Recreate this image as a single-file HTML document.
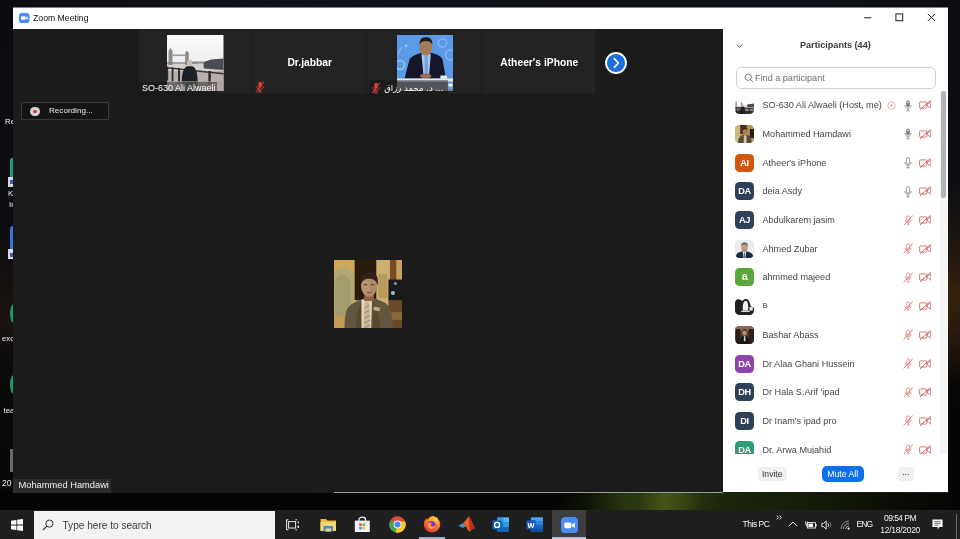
<!DOCTYPE html>
<html lang="en">
<head>
<meta charset="utf-8">
<title>Zoom Meeting</title>
<style>
*{box-sizing:border-box;margin:0;padding:0}
html,body{width:960px;height:539px;overflow:hidden;background:#0a0b0f}
body{position:relative;font-family:"Liberation Sans","DejaVu Sans",sans-serif;color:#fff;-webkit-font-smoothing:antialiased}
.abs{position:absolute}
#win,#task,#desk{will-change:transform}
#desk{position:absolute;left:0;top:0;width:960px;height:539px;background:#0a0b0f;overflow:hidden}
#win{position:absolute;left:13px;top:7px;width:935px;height:486px;background:#1b1b1b;overflow:hidden}
#title{position:absolute;left:0;top:0;width:935px;height:22px;background:linear-gradient(#7e7f82 0,#7e7f82 1px,#fff 1px);color:#111}
#title .t{position:absolute;left:20px;top:4.8px;font-size:8.7px;line-height:12px;color:#111;white-space:nowrap}
#video{position:absolute;left:0;top:22px;width:709.5px;height:464px;background:#1b1b1b}
.tile{position:absolute;top:-0.5px;height:65px;width:113px;background:#232323}
.tile .nm{position:absolute;left:0;right:0;top:26.8px;text-align:center;font-weight:bold;font-size:10.3px;line-height:14px;color:#fff}
#panel{position:absolute;left:709.5px;top:22px;width:225.5px;height:463px;background:#fff;color:#333;overflow:hidden}
#task{position:absolute;left:0;top:510px;width:960px;height:29px;background:#1f1f1f}

.lbl{position:absolute;top:52.5px;height:13px;background:rgba(20,20,20,.42);font-size:9px;line-height:13.5px;color:#fff;white-space:nowrap;overflow:hidden}
.ar{left:17px;top:52px;width:59.5px;height:15px;font-size:8.5px;line-height:15px;color:#fff;text-align:right;white-space:nowrap;font-family:"DejaVu Sans","Liberation Sans",sans-serif}
.nextbtn{left:592px;top:22.5px;width:22px;height:22px}
.rec{left:8px;top:72.5px;width:88px;height:18px;border:1px solid #3a3a3a;background:#141414;border-radius:1px}
.rec .dot{position:absolute;left:8px;top:3.5px;width:9.5px;height:9.5px;border-radius:50%;background:#d8d0d0}
.rec .dot i{position:absolute;left:3px;top:3px;width:3.5px;height:3.5px;border-radius:50%;background:#c8423c}
.rec .rt{position:absolute;left:27px;top:2px;font-size:8.1px;line-height:12px;color:#e8e8e8}
.mainlbl{left:0;top:449px;width:98px;height:14px;background:#2c2c2c;font-size:9.3px;line-height:13.5px;color:#eee;white-space:nowrap}
.mainlbl span{margin-left:5.5px}

.ptitle{left:77.5px;top:9.2px;font-weight:bold;font-size:9.1px;line-height:12px;color:#3a3a3a;white-space:nowrap}
.search{left:13.5px;top:37.25px;width:200px;height:22px;border:1px solid #cfcfcf;border-radius:5px;background:#fff}
.search span{position:absolute;left:18px;top:4px;font-size:9.1px;line-height:12px;color:#6e6e6e;white-space:nowrap}
.list{left:0;top:61px;width:217px;height:363.5px;overflow:hidden}
.row{position:absolute;left:0;width:217px;height:18px}
.row .av{position:absolute;left:12.6px;top:0;width:19px;height:18px;border-radius:4.5px;overflow:hidden;text-align:center;color:#fff;font-weight:bold;font-size:9.2px;line-height:18px;letter-spacing:-0.2px}
.row .av svg{display:block}
.row .pn{position:absolute;left:40px;top:3px;font-size:9.1px;line-height:12px;color:#454545;white-space:nowrap}
.sbtrack{left:217.5px;top:61px;width:6.5px;height:364px;background:#f4f4f4}
.sbthumb{left:218px;top:61px;width:5.5px;height:107px;background:#b4b4b4;border-radius:3px}
.foot{left:0;top:424.5px;width:225.5px;height:37.5px;background:#fff}
.btn{background:#f0f0f2;border-radius:4px;color:#333;font-size:8.6px;line-height:14.5px;text-align:center;white-space:nowrap}
.btn.blue{background:#0e71eb;color:#fff;line-height:16px;border-radius:5px;font-size:8.7px}

.sbox{left:34px;top:1px;width:241px;height:27.5px;background:#f3f3f3}
.sbox span{position:absolute;left:28.5px;top:7.5px;font-size:10.1px;line-height:14px;color:#3a3a3a;white-space:nowrap}
.tt{font-size:8.5px;line-height:12px;color:#f2f2f2;white-space:nowrap}
.dl{font-size:7.8px;line-height:10px;color:#f0f0f0;white-space:nowrap;width:50px}
</style>
</head>
<body>

<svg width="0" height="0" style="position:absolute">
  <defs>
    <filter id="blr" x="-5%" y="-5%" width="110%" height="110%"><feGaussianBlur stdDeviation="0.45"/></filter>
    <filter id="blr2" x="-5%" y="-5%" width="110%" height="110%"><feGaussianBlur stdDeviation="0.7"/></filter>
    <g id="micoff">
      <rect x="3.4" y="0.8" width="3.2" height="6" rx="1.6" fill="#e0433a"/>
      <path d="M1.6 5.2 C1.6 9.6 8.4 9.6 8.4 5.2" fill="none" stroke="#e0433a" stroke-width="1"/>
      <path d="M5 8.6 V10.6 M3.2 10.8 H6.8" stroke="#e0433a" stroke-width="1" fill="none"/>
      <path d="M8.6 0.8 L1.4 11" stroke="#e0433a" stroke-width="1.1"/>
    </g>

    <g id="micfill">
      <rect x="2.2" y="0.5" width="3.6" height="6.6" rx="1.8" fill="#777"/>
      <rect x="2.9" y="1.4" width="2.2" height="1.8" rx="0.8" fill="#d8d8d8"/>
      <path d="M0.9 5 C0.9 9.4 7.1 9.4 7.1 5" fill="none" stroke="#888" stroke-width="0.9"/>
      <path d="M4 8.4 V10.6 M2.3 10.8 H5.7" stroke="#888" stroke-width="0.9" fill="none"/>
    </g>
    <g id="micline">
      <rect x="2.4" y="0.7" width="3.2" height="6.4" rx="1.6" fill="none" stroke="#8a8a8a" stroke-width="0.9"/>
      <path d="M0.9 5 C0.9 9.4 7.1 9.4 7.1 5" fill="none" stroke="#8a8a8a" stroke-width="0.9"/>
      <path d="M4 8.4 V10.6 M2.3 10.8 H5.7" stroke="#8a8a8a" stroke-width="0.9" fill="none"/>
    </g>
    <g id="micmut">
      <rect x="3.7" y="0.9" width="3" height="5.6" rx="1.5" fill="none" stroke="#e08884" stroke-width="0.85"/>
      <path d="M2.3 4.8 C2.3 8.8 8.1 8.8 8.1 4.8" fill="none" stroke="#e08884" stroke-width="0.85"/>
      <path d="M5.2 7.9 V9.8 M3.6 10 H6.8" stroke="#e08884" stroke-width="0.85" fill="none"/>
      <path d="M9.9 0.4 L0.6 10.4" stroke="#c87470" stroke-width="0.9"/>
    </g>
    <g id="camoff">
      <rect x="0.6" y="1.9" width="7.2" height="6.2" rx="0.9" fill="none" stroke="#d8706c" stroke-width="0.95"/>
      <path d="M8.4 4.2 L11.8 1.8 V8.2 L8.4 5.8 Z" fill="none" stroke="#d8706c" stroke-width="0.9" stroke-linejoin="round"/>
      <path d="M11.6 0.3 L0.9 9.9" stroke="#c85a56" stroke-width="0.95"/>
    </g>
  </defs>
</svg>
<div id="desk">
  <div class="abs" style="left:0;top:0;width:960px;height:8px;background:linear-gradient(90deg,#0b0c10,#10131a 30%,#0d0f15 60%,#0e1117 85%,#0b0c10)"></div>
  <div class="abs" style="left:0;top:0;width:13px;height:493px;background:linear-gradient(180deg,#0b0c10 0,#0c0d11 45%,#15100e 58%,#1a1210 66%,#0c0a0a 72%,#070707 100%)"></div>
  <div class="abs" style="left:948px;top:0;width:12px;height:511px;background:linear-gradient(180deg,#0c0d12 0,#0d0e13 35%,#1c140f 47%,#33200f 57%,#2e1c0e 63%,#1a110a 70%,#070605 76%,#050505 100%)"></div>
  <div class="abs" style="left:0;top:492px;width:960px;height:19px;background:linear-gradient(90deg,#040404 0,#050505 58%,#0c1206 61%,#283610 65%,#303d10 70%,#1c280a 75%,#131b08 85%,#0a0d05 93%,#050505 100%)"></div>
  <div class="abs" style="left:640px;top:493px;width:60px;height:17px;background:linear-gradient(100deg,rgba(80,100,25,0) 0,rgba(84,104,28,.55) 40%,rgba(60,78,18,0) 100%)"></div>
  <!-- desktop icon fragments at left edge -->
  <div class="abs dl" style="left:5px;top:116.5px">Re</div>
  <div class="abs" style="left:9.5px;top:158px;width:3.5px;height:19px;background:#2a9478;border-radius:2px 0 0 0"></div>
  <div class="abs" style="left:8px;top:177px;width:5px;height:9.5px;background:#cfd6e4"></div>
  <div class="abs" style="left:10px;top:180px;width:3px;height:4px;background:#3a5ea8"></div>
  <div class="abs dl" style="left:8px;top:189px">K</div>
  <div class="abs dl" style="left:9px;top:199.5px">Ir</div>
  <div class="abs" style="left:9.5px;top:226px;width:3.5px;height:23px;background:#3a74d0;border-radius:4px 0 0 0"></div>
  <div class="abs" style="left:8px;top:249px;width:5px;height:10px;background:#d8dce6"></div>
  <div class="abs" style="left:10px;top:252.5px;width:3px;height:4px;background:#3a5ea8"></div>
  <div class="abs" style="left:9.5px;top:304px;width:7px;height:18.5px;background:#1f9a62;border-radius:50%"></div>
  <div class="abs dl" style="left:2px;top:334px">exc</div>
  <div class="abs" style="left:9.5px;top:375px;width:7px;height:19px;background:#1f9a62;border-radius:50%"></div>
  <div class="abs dl" style="left:3.5px;top:406px">tea</div>
  <div class="abs" style="left:9.5px;top:448.5px;width:3.5px;height:23.5px;background:#6a6a6a"></div>
  <div class="abs dl" style="left:2px;top:478px;font-size:8.6px">20</div>
</div>
<div id="win">
  <div id="title">
    <svg class="abs" style="left:6px;top:5.7px" width="10.5" height="10" viewBox="0 0 10.5 10"><rect width="10.5" height="10" rx="2.8" fill="#4a8cf5"/><rect x="2" y="3.2" width="4.6" height="3.6" rx="0.8" fill="#fff"/><path d="M7 4.4 L8.6 3.4 V6.6 L7 5.6 Z" fill="#fff"/></svg>
    <span class="t">Zoom Meeting</span>
    <svg class="abs" style="left:850.5px;top:10.4px" width="8" height="2" viewBox="0 0 8 2"><path d="M0 0.8 H7.4" stroke="#222" stroke-width="1"/></svg>
    <svg class="abs" style="left:881.5px;top:5.9px" width="9" height="9" viewBox="0 0 9 9"><rect x="0.9" y="0.9" width="6.8" height="6.8" fill="none" stroke="#222" stroke-width="1"/></svg>
    <svg class="abs" style="left:914px;top:5.9px" width="9" height="9" viewBox="0 0 9 9"><path d="M0.8 0.8 L8 8 M8 0.8 L0.8 8" stroke="#222" stroke-width="1"/></svg>
  </div>

  <div id="video"><div class="abs" style="left:0;top:0.5px;width:709.5px;height:463.5px">
    <!-- thumbnail strip -->
    <div class="tile" style="left:126px">
      <svg class="abs" style="left:28px;top:6px" width="56.5" height="56" viewBox="0 0 56 56" preserveAspectRatio="none">
        <defs>
          <linearGradient id="sky1" x1="0" y1="0" x2="0" y2="1"><stop offset="0" stop-color="#fbfafa"/><stop offset="0.45" stop-color="#f1efef"/><stop offset="0.62" stop-color="#d9d5d6"/><stop offset="1" stop-color="#b9b0ae"/></linearGradient>
        </defs>
        <rect width="56" height="56" fill="url(#sky1)"/><g filter="url(#blr)">
        <rect x="0" y="28" width="56" height="8" fill="#d5d1d2"/>
        <rect x="0" y="36" width="56" height="20" fill="#b8aeac"/>
        <!-- bridge -->
        <rect x="1.5" y="16" width="4" height="14" fill="#8d8a8a"/>
        <polygon points="1.5,16 3.5,13 5.5,16" fill="#8d8a8a"/>
        <rect x="18" y="18" width="3.6" height="12" fill="#8d8a8a"/>
        <polygon points="18,18 19.8,15.5 21.6,18" fill="#8d8a8a"/>
        <rect x="5.5" y="19.5" width="12.5" height="1.6" fill="#9c9999"/>
        <rect x="0" y="27.4" width="30" height="1.2" fill="#77787c"/>
        <!-- buildings right -->
        <polygon points="36,27 44,24.5 56,23.5 56,35 36.5,33.5" fill="#4c4d53"/>
        <rect x="24" y="26.5" width="12" height="2" fill="#8a8b90"/>
        <!-- railing -->
        <polygon points="0,32 56,38 56,39.4 0,33.4" fill="#3a3532"/>
        <rect x="4.6" y="32.5" width="1.8" height="14" fill="#2f2a28"/>
        <rect x="11" y="33" width="1.9" height="15" fill="#2f2a28"/>
        <rect x="41" y="36" width="2.4" height="13" fill="#2f2a28"/>
        <rect x="0" y="31.5" width="1.2" height="14" fill="#2f2a28"/>
        <!-- man -->
        <ellipse cx="22.3" cy="28" rx="2.6" ry="3.4" fill="#cdbdb6"/>
        <path d="M14.6 47 C14.6 37 17 32 20 31.2 L25 31.2 C28.5 32 30.2 37 30.4 47 L30 56 L15 56 Z" fill="#1f232c"/>
        <rect x="0" y="46" width="56" height="10" fill="#a9a09d" opacity="0.6"/>
      </g></svg>
      <div class="lbl" style="left:0;width:77.5px"><span style="margin-left:3px">SO-630 Ali Alwaeli</span></div>
    </div>
    <div class="tile" style="left:240px"><div class="nm" style="left:0.5px">Dr.jabbar</div>
      <svg class="abs mut" style="left:2px;top:52px" width="10" height="12" viewBox="0 0 10 12"><use href="#micoff"/></svg>
    </div>
    <div class="tile" style="left:354px;width:113.5px">
      <svg class="abs" style="left:29.5px;top:6px" width="56.5" height="56" viewBox="0 0 56 56" preserveAspectRatio="none">
        <rect width="56" height="56" fill="#5a9ae6"/><g filter="url(#blr)">
        <circle cx="45" cy="8" r="4.2" fill="none" stroke="#84b8f2" stroke-width="1.3"/>
        <circle cx="53" cy="20" r="5" fill="none" stroke="#84b8f2" stroke-width="1.3"/>
        <circle cx="3" cy="30" r="4.5" fill="none" stroke="#7fd0e8" stroke-width="1.6"/>
        <circle cx="9" cy="11" r="1.4" fill="#9cc8f6"/>
        <path d="M1 20 Q3 14 5 12" stroke="#84b8f2" stroke-width="1.2" fill="none"/>
        <!-- suit -->
        <path d="M7.5 43.5 L12.5 24 C15 20.5 21 18.5 24 18 L34 18 C38 18.5 43 20.5 45 24 L48.5 43.5 Z" fill="#141829"/>
        <!-- shirt -->
        <polygon points="24.2,19 33.5,19 31.8,40 26.2,40" fill="#a9c6ee"/>
        <rect x="27.4" y="21" width="3.2" height="18" fill="#6ea2e4"/>
        <!-- head -->
        <ellipse cx="28.7" cy="12.2" rx="6.2" ry="8.6" fill="#a77a5c"/>
        <path d="M22.3 10 C22 3 26 2.2 28.8 2.2 C32 2.2 35.4 3.4 35 10 C34 6.8 31.5 6 28.7 6 C26 6 23.4 6.8 22.3 10 Z" fill="#1c1a1c"/>
        <!-- hands -->
        <ellipse cx="28.4" cy="41" rx="5.6" ry="2.6" fill="#a06a58"/>
        <!-- desk -->
        <rect x="0" y="43.5" width="56" height="3.2" fill="#e4e6ea"/>
        <rect x="43" y="40.5" width="6.5" height="3.2" fill="#eef1f4"/>
        <rect x="0" y="46.7" width="56" height="9.3" fill="#7d8189"/>
        <rect x="50" y="47" width="6" height="7" fill="#6d9be0"/>
        <ellipse cx="53" cy="50" rx="2.4" ry="1.6" fill="#e8eef8"/>
      </g></svg>
      <div class="lbl" style="left:2px;width:78.5px;top:51px;height:14px"></div>
      <svg class="abs mut" style="left:4px;top:52.5px" width="10" height="12" viewBox="0 0 10 12"><use href="#micoff"/></svg>
      <div class="abs ar" dir="rtl">... د. محمد رزاق</div>
    </div>
    <div class="tile" style="left:468.5px;width:113px"><div class="nm" style="left:2.5px">Atheer's iPhone</div></div>
    <div class="abs nextbtn"><svg width="22" height="22" viewBox="0 0 22 22"><circle cx="11" cy="11" r="10" fill="#1a6fe0" stroke="#fff" stroke-width="1.8"/><path d="M9.3 6.6 L13.4 11 L9.3 15.4" fill="none" stroke="#fff" stroke-width="1.7" stroke-linecap="round" stroke-linejoin="round"/></svg></div>

    <!-- recording -->
    <div class="abs rec"><span class="dot"><i></i></span><span class="rt">Recording...</span></div>

    <!-- main photo -->
    <svg class="abs" style="left:320.7px;top:230.5px" width="68.5" height="68.2" viewBox="0 0 68 68" preserveAspectRatio="none">
      <rect width="68" height="68" fill="#a8864a"/><g filter="url(#blr2)">
      <rect x="-2" y="-2" width="24" height="72" fill="#cdaa58"/>
      <path d="M-1 70 L-1 16 C1 4 16 3 20 16 L20 70 Z" fill="#b3a873"/>
      <path d="M1 58 L1 22 C4 12 13 12 16.5 22 L16.5 58 Z" fill="#a39c6c"/>
      <rect x="20.5" y="-2" width="22" height="42" fill="#2c1c11"/>
      <rect x="42" y="-2" width="14" height="72" fill="#c9b172"/>
      <rect x="44" y="14" width="9" height="24" fill="#b99a5a"/>
      <rect x="55.5" y="-2" width="6.5" height="24" fill="#7a4826"/>
      <rect x="62" y="-2" width="8" height="24" fill="#c2a25c"/>
      <rect x="54" y="19.5" width="16" height="21" fill="#191a1e"/>
      <circle cx="58.5" cy="33" r="2" fill="#aeb6c8"/>
      <circle cx="61" cy="23.5" r="1.6" fill="#8a8f9a"/>
      <rect x="54" y="40.5" width="16" height="30" fill="#6c4a26"/>
      <rect x="56" y="52" width="12" height="8" fill="#8a6a3a"/>
      <rect x="-2" y="56" width="14" height="14" fill="#c49a56"/>
      <!-- suit -->
      <path d="M10.5 70 C10.5 50 13 45 23 41.5 L29 38.4 L41 38.4 L48 41.5 C56.5 45 58 52 58.5 70 Z" fill="#63573f"/>
      <path d="M22 70 C22 55 24 48 28 41 L27 70 Z" fill="#54492f"/>
      <path d="M46 70 C46 55 42 48 38 41 L39 70 Z" fill="#54492f"/>
      <!-- shirt + tie -->
      <polygon points="27.2,39.5 37.8,39.5 36.8,70 27.4,70" fill="#e2d6c0"/>
      <polygon points="30.4,42 35,42 36,70 29.2,70" fill="#c9b498"/>
      <path d="M30 48 L35.4 45 M29.8 53 L35.6 50 M29.6 58 L35.8 55 M29.4 63 L36 60 M29.3 68 L36 65" stroke="#a8906e" stroke-width="1.1"/>
      <polygon points="39.4,46.4 45.6,47.6 45.2,51 39.4,50.2" fill="#b5a88a"/>
      <!-- neck/head -->
      <rect x="30" y="32" width="9.6" height="9" fill="#8e6442"/>
      <ellipse cx="34.8" cy="25.8" rx="8" ry="10.8" fill="#b08a66"/>
      <ellipse cx="31.5" cy="27" rx="4" ry="7" fill="#bd9872" opacity=".7"/>
      <path d="M26.6 25 C25 13.6 30 12.6 35 12.6 C40.6 12.6 45 14.6 43.2 26 C42.6 20.5 39.6 18.6 35 18.6 C31 18.6 27.6 20 26.6 25 Z" fill="#33221a"/>
      <path d="M29.5 24.6 H33 M36.6 24.6 H40" stroke="#4a3224" stroke-width="1"/>
      <path d="M32.6 32.4 H37.4" stroke="#7a4e38" stroke-width="0.9"/>
      </g></svg>

    <!-- name label -->
    <div class="abs mainlbl"><span>Mohammed Hamdawi</span></div>
    <div class="abs" style="left:320.5px;top:462.2px;width:389px;height:1.1px;background:#9e9e9e"></div>
  </div></div>

  <div id="panel"><div class="abs" style="left:0;top:0.5px;width:225.5px;height:463px">
    <svg class="abs" style="left:13.5px;top:13px" width="7" height="6" viewBox="0 0 7 6"><path d="M0.8 1.6 L3.5 4.3 L6.2 1.6" fill="none" stroke="#555" stroke-width="1"/></svg>
    <div class="abs ptitle">Participants (44)</div>
    <div class="abs search"><svg class="abs" style="left:6.5px;top:5.5px" width="10" height="10" viewBox="0 0 10 10"><circle cx="4.2" cy="4.2" r="3.2" fill="none" stroke="#777" stroke-width="0.9"/><path d="M6.6 6.6 L9.2 9.2" stroke="#777" stroke-width="1"/></svg><span>Find a participant</span></div>
    <div class="abs list">
      <div class="row" style="top:5.70px"><div class="av ph"><svg width="19" height="18" viewBox="0 0 18 18" preserveAspectRatio="none"><rect width="18" height="18" fill="#fbfbfb"/><rect x="0" y="9.5" width="18" height="2" fill="#dedbdb"/><rect x="0.4" y="5.5" width="1.4" height="5" fill="#9a9797"/><rect x="5.6" y="6.3" width="1.3" height="4" fill="#9a9797"/><polygon points="11.5,8.6 18,7.6 18,11.5 11.6,11.2" fill="#4a4b50"/><rect x="0" y="11.5" width="18" height="6.5" fill="#8c8684"/><polygon points="0,10.8 18,12.6 18,13.3 0,11.5" fill="#2a2624"/><rect x="1.2" y="11" width="0.9" height="6" fill="#2a2624"/><rect x="3.4" y="11" width="0.9" height="6" fill="#2a2624"/><rect x="13" y="12" width="1" height="5" fill="#2a2624"/><ellipse cx="7.2" cy="9.4" rx="1" ry="1.2" fill="#c8b8b0"/><path d="M4.6 18 C4.6 12.5 5.8 10.6 7.2 10.6 C8.8 10.6 9.9 12.5 9.9 18 Z" fill="#1d2028"/><rect x="0" y="15" width="18" height="3" fill="#26221f" opacity=".85"/></svg></div><div class="pn">SO-630 Ali Alwaeli (Host, me)</div><svg class="abs" style="left:164px;top:4.6px" width="9" height="9" viewBox="0 0 9 9"><circle cx="4.5" cy="4.5" r="3.7" fill="none" stroke="#e2a5a5" stroke-width="0.9"/><circle cx="4.5" cy="4.5" r="1.1" fill="#dd8a8a"/></svg><svg class="abs" style="left:181.5px;top:3.5px" width="8" height="12" viewBox="0 0 8 12"><use href="#micfill"/></svg><svg class="abs" style="left:196.3px;top:4px" width="12.4" height="10.2" viewBox="0 0 12.4 10.2"><use href="#camoff"/></svg></div>
      <div class="row" style="top:34.40px"><div class="av ph"><svg width="19" height="18" viewBox="0 0 18 18" preserveAspectRatio="none"><rect width="18" height="18" fill="#b8954e"/><rect x="0" y="0" width="5" height="18" fill="#cdb77c"/><rect x="5" y="0" width="6" height="9" fill="#4a2f18"/><rect x="14" y="4" width="4" height="9" fill="#2a1e14"/><path d="M3 18 C3 12 5 10.6 8 10 L11.5 10 C14.5 10.6 15.6 12 15.6 18 Z" fill="#5b4a39"/><rect x="8.3" y="10.3" width="2.6" height="7.7" fill="#d4c4ac"/><ellipse cx="9.5" cy="6.6" rx="2.2" ry="3" fill="#ad7c56"/><path d="M7.2 6 C7 3 8.4 2.8 9.6 2.8 C11 2.8 12 3.2 11.8 6 C11.4 4.6 10.6 4.3 9.5 4.3 C8.4 4.3 7.6 4.6 7.2 6 Z" fill="#3a2618"/></svg></div><div class="pn">Mohammed Hamdawi</div><svg class="abs" style="left:181.5px;top:3.5px" width="8" height="12" viewBox="0 0 8 12"><use href="#micfill"/></svg><svg class="abs" style="left:196.3px;top:4px" width="12.4" height="10.2" viewBox="0 0 12.4 10.2"><use href="#camoff"/></svg></div>
      <div class="row" style="top:63.10px"><div class="av" style="background:#d4560e"><span>AI</span></div><div class="pn">Atheer's iPhone</div><svg class="abs" style="left:181.5px;top:3.5px" width="8" height="12" viewBox="0 0 8 12"><use href="#micline"/></svg><svg class="abs" style="left:196.3px;top:4px" width="12.4" height="10.2" viewBox="0 0 12.4 10.2"><use href="#camoff"/></svg></div>
      <div class="row" style="top:91.80px"><div class="av" style="background:#2e405a"><span>DA</span></div><div class="pn">deia Asdy</div><svg class="abs" style="left:181.5px;top:3.5px" width="8" height="12" viewBox="0 0 8 12"><use href="#micline"/></svg><svg class="abs" style="left:196.3px;top:4px" width="12.4" height="10.2" viewBox="0 0 12.4 10.2"><use href="#camoff"/></svg></div>
      <div class="row" style="top:120.50px"><div class="av" style="background:#2e405a"><span>AJ</span></div><div class="pn">Abdulkarem jasim</div><svg class="abs" style="left:180px;top:3.5px" width="10.6" height="10.8" viewBox="0 0 10.6 10.8"><use href="#micmut"/></svg><svg class="abs" style="left:196.3px;top:4px" width="12.4" height="10.2" viewBox="0 0 12.4 10.2"><use href="#camoff"/></svg></div>
      <div class="row" style="top:149.20px"><div class="av ph"><svg width="19" height="18" viewBox="0 0 18 18" preserveAspectRatio="none"><rect width="18" height="18" fill="#e9edf0"/><path d="M0.5 18 C1 13.5 3 12.4 6.5 11.6 L11.5 11.6 C15 12.4 17 13.5 17.5 18 Z" fill="#1e2a3e"/><polygon points="7.4,11.6 10.6,11.6 9.8,18 8.2,18" fill="#e8eef6"/><rect x="8.5" y="12.6" width="1" height="5.4" fill="#4a6ea8"/><ellipse cx="9" cy="7.4" rx="3.1" ry="4.2" fill="#c39c7c"/><path d="M5.9 6.6 C5.6 3 7.4 2.6 9 2.6 C10.8 2.6 12.4 3 12.1 6.6 C11.5 4.8 10.5 4.5 9 4.5 C7.5 4.5 6.5 4.8 5.9 6.6 Z" fill="#6a6866"/><path d="M6.4 9.4 C7 12 11 12 11.6 9.4 C10.8 10.6 7.2 10.6 6.4 9.4 Z" fill="#8a8380"/></svg></div><div class="pn">Ahmed Zubar</div><svg class="abs" style="left:180px;top:3.5px" width="10.6" height="10.8" viewBox="0 0 10.6 10.8"><use href="#micmut"/></svg><svg class="abs" style="left:196.3px;top:4px" width="12.4" height="10.2" viewBox="0 0 12.4 10.2"><use href="#camoff"/></svg></div>
      <div class="row" style="top:177.90px"><div class="av" style="background:#5aa83c;font-size:11px;line-height:16.5px"><span>a</span></div><div class="pn">ahmmed majeed</div><svg class="abs" style="left:180px;top:3.5px" width="10.6" height="10.8" viewBox="0 0 10.6 10.8"><use href="#micmut"/></svg><svg class="abs" style="left:196.3px;top:4px" width="12.4" height="10.2" viewBox="0 0 12.4 10.2"><use href="#camoff"/></svg></div>
      <div class="row" style="top:206.60px"><div class="av ph"><svg width="19" height="18" viewBox="0 0 18 18" preserveAspectRatio="none"><rect width="18" height="18" fill="#fff"/><path d="M0 18 L0 6 C0 3 2 1.5 4.5 2.4 L7 4 C9 1 13 1.6 13.6 5 L15 9 L18 11 L18 18 Z" fill="#20211f"/><path d="M8 6 C8.6 3.6 11.4 3.4 12 5.8 C12.6 8 12.8 11 12.4 13.4 L7.6 13.4 C7 10.6 7.4 8 8 6 Z" fill="#f1f1f1"/><rect x="6" y="13.6" width="8" height="1.4" fill="#d9d9d9"/><rect x="13.8" y="9.8" width="3" height="3.8" fill="#e8e8e8"/></svg></div><div class="pn" style="font-size:7.6px">B</div><svg class="abs" style="left:180px;top:3.5px" width="10.6" height="10.8" viewBox="0 0 10.6 10.8"><use href="#micmut"/></svg><svg class="abs" style="left:196.3px;top:4px" width="12.4" height="10.2" viewBox="0 0 12.4 10.2"><use href="#camoff"/></svg></div>
      <div class="row" style="top:235.30px"><div class="av ph"><svg width="19" height="18" viewBox="0 0 18 18" preserveAspectRatio="none"><rect width="18" height="18" fill="#5a3a2a"/><rect x="0" y="0" width="18" height="5" fill="#8a6a52"/><rect x="1" y="3" width="4" height="15" fill="#2a1c18"/><rect x="13" y="3" width="5" height="15" fill="#30201a"/><path d="M4.6 18 C4.6 12 6 10.6 7.6 10 L10.6 10 C12.4 10.6 13.6 12 13.6 18 Z" fill="#1c1716"/><rect x="8.4" y="10.2" width="1.5" height="5" fill="#d8d0cc"/><ellipse cx="9.1" cy="6.8" rx="2" ry="2.8" fill="#b98d74"/><path d="M7 6 C7 3.4 8.2 3.2 9.1 3.2 C10.2 3.2 11.3 3.6 11.2 6 C10.8 4.8 10.2 4.6 9.1 4.6 C8 4.6 7.4 4.8 7 6 Z" fill="#241a16"/></svg></div><div class="pn">Bashar Abass</div><svg class="abs" style="left:180px;top:3.5px" width="10.6" height="10.8" viewBox="0 0 10.6 10.8"><use href="#micmut"/></svg><svg class="abs" style="left:196.3px;top:4px" width="12.4" height="10.2" viewBox="0 0 12.4 10.2"><use href="#camoff"/></svg></div>
      <div class="row" style="top:264.00px"><div class="av" style="background:#8e44ad"><span>DA</span></div><div class="pn">Dr Alaa Ghani Hussein</div><svg class="abs" style="left:180px;top:3.5px" width="10.6" height="10.8" viewBox="0 0 10.6 10.8"><use href="#micmut"/></svg><svg class="abs" style="left:196.3px;top:4px" width="12.4" height="10.2" viewBox="0 0 12.4 10.2"><use href="#camoff"/></svg></div>
      <div class="row" style="top:292.70px"><div class="av" style="background:#2e405a"><span>DH</span></div><div class="pn">Dr Hala S.Arif 'ipad</div><svg class="abs" style="left:180px;top:3.5px" width="10.6" height="10.8" viewBox="0 0 10.6 10.8"><use href="#micmut"/></svg><svg class="abs" style="left:196.3px;top:4px" width="12.4" height="10.2" viewBox="0 0 12.4 10.2"><use href="#camoff"/></svg></div>
      <div class="row" style="top:321.40px"><div class="av" style="background:#2e405a"><span>DI</span></div><div class="pn">Dr Inam's ipad pro</div><svg class="abs" style="left:180px;top:3.5px" width="10.6" height="10.8" viewBox="0 0 10.6 10.8"><use href="#micmut"/></svg><svg class="abs" style="left:196.3px;top:4px" width="12.4" height="10.2" viewBox="0 0 12.4 10.2"><use href="#camoff"/></svg></div>
      <div class="row" style="top:350.10px"><div class="av" style="background:#2a9d78"><span>DA</span></div><div class="pn">Dr. Arwa Mujahid</div><svg class="abs" style="left:180px;top:3.5px" width="10.6" height="10.8" viewBox="0 0 10.6 10.8"><use href="#micmut"/></svg><svg class="abs" style="left:196.3px;top:4px" width="12.4" height="10.2" viewBox="0 0 12.4 10.2"><use href="#camoff"/></svg></div>
    </div>
    <div class="abs sbtrack"></div>
    <div class="abs sbthumb"></div>
    <div class="abs foot">
      <div class="abs btn" style="left:35px;top:12.5px;width:29.5px;height:14.5px">Invite</div>
      <div class="abs btn blue" style="left:99.25px;top:11.8px;width:42px;height:16px">Mute All</div>
      <div class="abs btn" style="left:175.5px;top:12.5px;width:15.5px;height:14.5px;line-height:11px">...</div>
    </div>
  </div></div>
</div>

<div id="task">
  <!-- start -->
  <svg class="abs" style="left:10.5px;top:8.5px" width="12.5" height="12" viewBox="0 0 12.5 12"><path d="M0 1.7 L5.4 0.9 V5.6 H0 Z M6.2 0.8 L12.5 0 V5.6 H6.2 Z M0 6.4 H5.4 V11.1 L0 10.3 Z M6.2 6.4 H12.5 V12 L6.2 11.2 Z" fill="#fff"/></svg>
  <div class="abs sbox"><svg class="abs" style="left:8px;top:7.8px" width="12" height="12" viewBox="0 0 12 12"><circle cx="7.4" cy="4.6" r="3.6" fill="none" stroke="#333" stroke-width="1"/><path d="M4.8 7.2 L1 11" stroke="#333" stroke-width="1.1"/></svg><span>Type here to search</span></div>
  <!-- task view -->
  <svg class="abs" style="left:286px;top:8.5px" width="14" height="12" viewBox="0 0 14 12"><rect x="2.6" y="2.6" width="7" height="6.4" fill="none" stroke="#e8e8e8" stroke-width="1"/><path d="M0.6 0.6 V11 M0.6 0.8 H2.4 M0.6 10.8 H2.4" stroke="#e8e8e8" stroke-width="1" fill="none"/><path d="M11 0.8 H9.4 M11 10.8 H9.4" stroke="#e8e8e8" stroke-width="1"/><rect x="11.6" y="2.6" width="1.4" height="1.6" fill="#e8e8e8"/><rect x="11.6" y="6.6" width="1.4" height="2.4" fill="#e8e8e8"/></svg>
  <!-- explorer -->
  <svg class="abs" style="left:320px;top:7.5px" width="16.5" height="14" viewBox="0 0 16.5 14"><path d="M0.5 1 H6 L7.4 2.4 H16 V13 H0.5 Z" fill="#e8b84a"/><rect x="0.5" y="4" width="15.5" height="9" fill="#f6d674"/><rect x="3.6" y="8" width="9.4" height="5.5" fill="#3f8fd0"/><rect x="5.6" y="10.4" width="5.4" height="3.1" fill="#f6d674"/></svg>
  <!-- store -->
  <svg class="abs" style="left:354px;top:6px" width="16.5" height="16.5" viewBox="0 0 16.5 16.5"><path d="M5 5 V3.4 C5 0.4 11.5 0.4 11.5 3.4 V5" fill="none" stroke="#f2f2f2" stroke-width="1.2"/><rect x="0.8" y="4.6" width="15" height="11.4" fill="#f2f2f2"/><rect x="5.2" y="7.4" width="2.6" height="2.6" fill="#e8503a"/><rect x="8.6" y="7.4" width="2.6" height="2.6" fill="#7cb83e"/><rect x="5.2" y="10.8" width="2.6" height="2.6" fill="#3a9ee0"/><rect x="8.6" y="10.8" width="2.6" height="2.6" fill="#f2c230"/></svg>
  <!-- chrome -->
  <svg class="abs" style="left:388.5px;top:6px" width="17" height="17" viewBox="0 0 17 17"><circle cx="8.5" cy="8.5" r="8.2" fill="#e84a3a"/><path d="M8.5 8.5 L1.4 4.4 A8.2 8.2 0 0 0 6.6 16.5 Z" fill="#3aa757"/><path d="M8.5 8.5 L6.6 16.5 A8.2 8.2 0 0 0 16.2 5.6 L8.5 5.6 Z" fill="#f7c92e"/><circle cx="8.5" cy="8.5" r="3.9" fill="#f4f4f4"/><circle cx="8.5" cy="8.5" r="3" fill="#4a8af4"/></svg>
  <!-- firefox -->
  <svg class="abs" style="left:422.5px;top:5px" width="18" height="18" viewBox="0 0 18 18"><defs><radialGradient id="ffg" cx="0.7" cy="0.2" r="0.9"><stop offset="0" stop-color="#ffd43a"/><stop offset="0.45" stop-color="#ff8a1e"/><stop offset="1" stop-color="#e8284a"/></radialGradient></defs><path d="M9 1.2 C11 0.6 12.2 1.6 12.6 2.6 C14 1.8 15 3 15 4.2 C16.8 5.8 17.4 8 17.2 10 C16.8 14.4 13.2 17.4 9 17.4 C4.6 17.4 0.8 13.8 0.8 9.4 C0.8 6.4 2.2 4.2 3.6 3.2 C3.6 4 3.8 4.6 4.2 5 C5 3 7 1.6 9 1.2 Z" fill="url(#ffg)"/><circle cx="8.6" cy="10" r="4" fill="#7a3ad8"/><path d="M4.6 9 C5.6 7.2 8 7.4 9.4 8.4 C8 8.4 7.4 9.4 7.8 10.4 C8.6 12 11.4 11.8 12.2 10 C12.8 13 10 14.6 7.8 14 C5.6 13.4 4.2 11.4 4.6 9 Z" fill="#ff9a2a"/></svg>
  <div class="abs" style="left:419px;top:27px;width:25.5px;height:1.5px;background:#9ab0c8"></div>
  <!-- matlab -->
  <svg class="abs" style="left:457.5px;top:6px" width="18" height="17" viewBox="0 0 18 17"><path d="M0.5 9.4 L5 7.2 L8 10.4 L4.4 12 Z" fill="#4a8ec8"/><path d="M5 7.2 C8 4.6 9.6 1 11.4 0.6 L12 16 C10 14.6 9 12.4 8 10.4 Z" fill="#e8622a"/><path d="M11.4 0.6 C13.2 2 15 9 17.4 12.6 C15.4 12.2 13.6 14.4 12 16 Z" fill="#b8301e"/></svg>
  <!-- outlook -->
  <svg class="abs" style="left:491.5px;top:7px" width="17.5" height="15.5" viewBox="0 0 17.5 15.5"><rect x="5.4" y="0.4" width="11.6" height="14.4" rx="1" fill="#1a78d4"/><rect x="5.4" y="0.4" width="5.8" height="4.8" fill="#2a9ae8"/><rect x="11.2" y="0.4" width="5.8" height="4.8" fill="#54b8f4"/><rect x="11.2" y="5.2" width="5.8" height="4.8" fill="#2a9ae8"/><path d="M5.4 10 L17 10 V14 C17 14.6 16.6 14.8 16 14.8 H5.4 Z" fill="#1464b8"/><rect x="0.4" y="3.2" width="9.4" height="9.4" rx="1" fill="#0e62b8"/><circle cx="5.1" cy="7.9" r="2.5" fill="none" stroke="#fff" stroke-width="1.4"/></svg>
  <!-- word -->
  <svg class="abs" style="left:526px;top:7px" width="17.5" height="15.5" viewBox="0 0 17.5 15.5"><rect x="5" y="0.4" width="12" height="14.6" rx="1" fill="#2a7ad8"/><rect x="5" y="0.4" width="12" height="3.7" fill="#48a0f0"/><rect x="5" y="4.1" width="12" height="3.7" fill="#2a86e0"/><rect x="5" y="7.8" width="12" height="3.6" fill="#1a66c4"/><rect x="5" y="11.4" width="12" height="3.6" fill="#154fa0"/><rect x="0.4" y="3.2" width="9.4" height="9.4" rx="1" fill="#1a58b4"/><text x="5.1" y="10.6" font-family="Liberation Sans, sans-serif" font-size="7.4" font-weight="bold" fill="#fff" text-anchor="middle">W</text></svg>
  <!-- zoom -->
  <div class="abs" style="left:552px;top:0;width:34px;height:28.5px;background:#3e3e3e"></div>
  <div class="abs" style="left:552px;top:27px;width:34px;height:1.5px;background:#b8c4d4"></div>
  <svg class="abs" style="left:561px;top:6.5px" width="17" height="16.5" viewBox="0 0 17 16.5"><rect x="0" y="0" width="17" height="16.5" rx="4.2" fill="#4a8cf5"/><rect x="3.2" y="5.4" width="7.2" height="5.8" rx="1.4" fill="#fff"/><path d="M11 7.4 L13.8 5.6 V11 L11 9.2 Z" fill="#fff"/></svg>

  <!-- tray -->
  <div class="abs tt" style="left:742.6px;top:7.5px;letter-spacing:-0.5px">This PC</div>
  <svg class="abs" style="left:775.5px;top:5px" width="7" height="5" viewBox="0 0 7 5"><path d="M0.7 0.6 L2.6 2.5 L0.7 4.4 M3.6 0.6 L5.5 2.5 L3.6 4.4" fill="none" stroke="#f0f0f0" stroke-width="0.95"/></svg>
  <svg class="abs" style="left:787.8px;top:11.3px" width="10" height="6" viewBox="0 0 10 6"><path d="M0.8 5.2 L5 1 L9.2 5.2" fill="none" stroke="#f0f0f0" stroke-width="1"/></svg>
  <svg class="abs" style="left:804.5px;top:10.5px" width="12" height="8" viewBox="0 0 12 8"><rect x="2.4" y="1.6" width="8" height="5.4" fill="none" stroke="#f0f0f0" stroke-width="0.9"/><rect x="3.4" y="2.6" width="4.6" height="3.4" fill="#f0f0f0"/><rect x="10.6" y="3" width="1" height="2.6" fill="#f0f0f0"/><path d="M0.6 0.4 V3.4 H2.2 V0.4 M1.4 3.4 V5.4" stroke="#f0f0f0" stroke-width="0.8" fill="none"/></svg>
  <svg class="abs" style="left:821px;top:9.5px" width="12" height="10" viewBox="0 0 12 10"><path d="M0.8 3.4 H2.6 L5.2 0.9 V9.1 L2.6 6.6 H0.8 Z" fill="none" stroke="#f0f0f0" stroke-width="0.9" stroke-linejoin="round"/><path d="M6.8 3.2 C7.8 4.2 7.8 5.8 6.8 6.8" fill="none" stroke="#f0f0f0" stroke-width="0.9"/><path d="M8.4 1.8 C10.2 3.6 10.2 6.4 8.4 8.2" fill="none" stroke="#777" stroke-width="0.9"/></svg>
  <svg class="abs" style="left:839.5px;top:9.5px" width="11" height="10" viewBox="0 0 11 10"><path d="M1 9 A8 8 0 0 1 9 1" fill="none" stroke="#8a8a8a" stroke-width="1"/><path d="M3.4 9 A5.6 5.6 0 0 1 9 3.4" fill="none" stroke="#9a9a9a" stroke-width="1"/><path d="M5.8 9 A3.2 3.2 0 0 1 9 5.8" fill="none" stroke="#aaa" stroke-width="1"/><circle cx="8.6" cy="8.6" r="1.1" fill="#f0f0f0"/></svg>
  <div class="abs tt" style="left:856.6px;top:7.5px;letter-spacing:-0.95px">ENG</div>
  <div class="abs tt" style="left:884px;top:1.5px;letter-spacing:-0.55px">09:54 PM</div>
  <div class="abs tt" style="left:880.3px;top:13.5px;letter-spacing:-0.28px">12/18/2020</div>
  <svg class="abs" style="left:932px;top:9px" width="11" height="11" viewBox="0 0 11 11"><path d="M0.4 0.4 H10.6 V8 H7.4 L5.6 10.4 V8 H0.4 Z" fill="#f4f4f4"/><path d="M2.4 2.6 H8.6 M2.4 4.4 H8.6 M2.4 6.2 H6.4" stroke="#444" stroke-width="0.7"/></svg>
  <div class="abs" style="left:955.5px;top:4px;width:1px;height:24.5px;background:#6a6a6a"></div>
</div>
</body>
</html>
